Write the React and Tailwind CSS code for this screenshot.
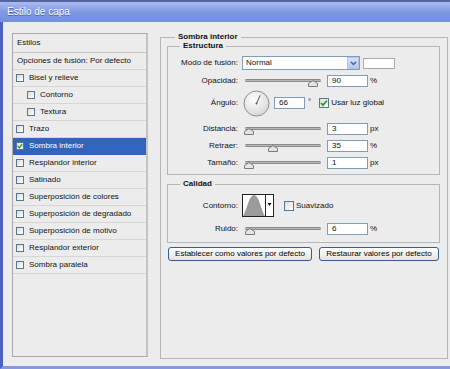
import React from "react";

const font = { fontFamily: '"Liberation Sans", Arial, sans-serif' };

// small xp-ish checkbox, optionally checked
const Check = ({ checked, size = 8, className = "" }) => (
  <span
    className={`flex shrink-0 items-center justify-center border border-[#5b7593] bg-gradient-to-br from-[#dcdcd6] to-white ${className}`}
    style={{ width: size, height: size }}
  >
    {checked && (
      <svg width={size - 2} height={size - 2} viewBox="0 0 8 8">
        <path d="M1 4 L3 6.2 L7 1.5" stroke="#21a121" strokeWidth="1.8" fill="none" />
      </svg>
    )}
  </span>
);

const styles = [
  { name: "Bisel y relieve" },
  { name: "Contorno", nested: true },
  { name: "Textura", nested: true },
  { name: "Trazo" },
  { name: "Sombra interior", active: true },
  { name: "Resplandor interior" },
  { name: "Satinado" },
  { name: "Superposición de colores" },
  { name: "Superposición de degradado" },
  { name: "Superposición de motivo" },
  { name: "Resplandor exterior" },
  { name: "Sombra paralela" },
];

const Field = ({ value, w = 41 }) => (
  <div
    className="flex h-[12px] items-center border border-[#7f9db9] bg-white pl-[4px]"
    style={{ width: w }}
  >
    {value}
  </div>
);

const Thumb = () => (
  <svg width="10" height="7" viewBox="0 0 10 7">
    <path d="M0.5 6.5 V3.5 L5 0.5 L9.5 3.5 V6.5 Z" fill="#e4e4e4" stroke="#7a7a7a" />
  </svg>
);

const Slider = ({ pos }) => (
  <div className="relative ml-[7px] h-[11px] w-[76px]">
    <div className="absolute top-[4px] h-[3px] w-full rounded-full border-y border-[#8a8a8a] bg-[#b8b8b8]" />
    <div className="absolute top-[5px]" style={{ left: pos - 5 }}>
      <Thumb />
    </div>
  </div>
);

const SliderRow = ({ label, pos, value, unit, className = "" }) => (
  <div className={`flex h-[17px] items-center ${className}`}>
    <span className="w-[70px] text-right">{label}</span>
    <Slider pos={pos} />
    <div className="ml-[6px]">
      <Field value={value} />
    </div>
    <span className="ml-[2px]">{unit}</span>
  </div>
);

const Dial = () => (
  <svg width="27" height="27" viewBox="0 0 27 27" className="ml-[5px]">
    <defs>
      <radialGradient id="dg" cx="40%" cy="35%" r="70%">
        <stop offset="0%" stopColor="#ffffff" />
        <stop offset="100%" stopColor="#d6d6d6" />
      </radialGradient>
    </defs>
    <circle cx="13.5" cy="13.5" r="12.5" fill="url(#dg)" stroke="#8e8e8e" />
    <line x1="13.5" y1="13.5" x2="17.2" y2="5.3" stroke="#555" strokeWidth="1" />
    <circle cx="13.5" cy="13.5" r="1" fill="#555" />
  </svg>
);

const Button = ({ children, w }) => (
  <button
    className="flex h-[14px] items-center justify-center rounded-[3px] border border-[#3c5a8a] bg-gradient-to-b from-white to-[#e4e4dc] text-[8px] leading-none text-black"
    style={{ width: w }}
  >
    {children}
  </button>
);

export default function App() {
  return (
    <div className="flex h-[369px] w-[450px] flex-col overflow-hidden bg-[#ececec] text-[8px] leading-none text-[#111]" style={font}>
      {/* title bar */}
      <div className="flex h-[22px] items-center border-t-2 border-[#55649c] bg-gradient-to-b from-[#a9bbf0] via-[#7f98e2] to-[#7490de] pl-[7px]">
        <span className="text-[10px] text-white [text-shadow:0_1px_0_#4b5fa8]">Estilo de capa</span>
      </div>

      <div className="flex flex-1 border-b-[3px] border-l-[3px] border-b-[#8798e2] border-l-[#4c62c2]">
        {/* left: styles list */}
        <div className="w-[157px] shrink-0 pl-[9px] pt-[11px]">
          <div className="flex h-[324px] w-[136px] flex-col border border-r-2 border-[#a8a8a8] border-r-[#c2c2c2]">
            <div className="flex h-[19px] shrink-0 items-center border-b border-[#c4c4c4] pl-[4px]">Estilos</div>
            <div className="flex h-[17px] shrink-0 items-center border-b border-[#d6d6d6] pl-[4px]">
              Opciones de fusión: Por defecto
            </div>
            {styles.map((s) => (
              <div
                key={s.name}
                className={`flex h-[17px] shrink-0 items-center border-b ${
                  s.active ? "border-[#2f62b8] bg-[#3164bd] text-white" : "border-[#d6d6d6]"
                } ${s.nested ? "pl-[14px]" : "pl-[3px]"}`}
              >
                <Check checked={s.active} />
                <span className="ml-[5px]">{s.name}</span>
              </div>
            ))}
          </div>
        </div>

        {/* right: settings */}
        <fieldset className="mt-[10px] h-[327px] w-[288px] border border-[#b6b6b6] pl-[6px]">
          <legend className="ml-[8px] px-[3px] text-[8px] font-bold leading-[10px]">Sombra interior</legend>

          <fieldset className="-mt-[1px] w-[273px] border border-[#b6b6b6] pb-[3px] pt-[4px]">
            <legend className="ml-[12px] px-[3px] font-bold leading-[10px]">Estructura</legend>

            <div className="flex h-[16px] items-center">
              <span className="w-[70px] text-right">Modo de fusión:</span>
              <div className="ml-[4px] flex h-[14px] w-[118px] items-center border border-[#7f9db9] bg-white pl-[3px]">
                <span className="flex-1">Normal</span>
                <span className="flex h-[12px] w-[12px] items-center justify-center border border-[#b0c4ef] bg-gradient-to-b from-[#d6e2fc] to-[#b4c8f4]">
                  <svg width="7" height="5" viewBox="0 0 7 5">
                    <path d="M0.8 0.8 L3.5 3.6 L6.2 0.8" stroke="#4d6185" strokeWidth="1.4" fill="none" />
                  </svg>
                </span>
              </div>
              <div className="ml-[3px] h-[11px] w-[32px] border border-[#a9a9a9] bg-white" />
            </div>

            <SliderRow className="mt-[1px]" label="Opacidad:" pos={68} value="90" unit="%" />

            <div className="mt-[1px] flex h-[26px] items-center">
              <span className="w-[70px] text-right">Ángulo:</span>
              <Dial />
              <div className="ml-[4px]">
                <Field value="66" w={31} />
              </div>
              <span className="ml-[3px] self-start pt-[8px]">°</span>
              <Check checked size={10} className="ml-[8px] border-[#1c5180] bg-white" />
              <span className="ml-[2px]">Usar luz global</span>
            </div>

            <SliderRow className="mt-[4px]" label="Distancia:" pos={4} value="3" unit="px" />
            <SliderRow label="Retraer:" pos={28} value="35" unit="%" />
            <SliderRow label="Tamaño:" pos={4} value="1" unit="px" />
          </fieldset>

          <fieldset className="mt-[4px] w-[273px] border border-[#b6b6b6] pb-[5px] pt-[5px]">
            <legend className="ml-[12px] px-[3px] font-bold leading-[10px]">Calidad</legend>

            <div className="flex h-[23px] items-center">
              <span className="w-[70px] text-right">Contorno:</span>
              <svg width="32" height="23" viewBox="0 0 32 23" className="ml-[4px]">
                <rect x="0.5" y="0.5" width="31" height="22" fill="#fff" stroke="#222" />
                <path d="M1 22 C5 16 7 1 12 1 C17 1 19 16 23 22 Z" fill="#9b9b9b" />
                <line x1="23.5" y1="0.5" x2="23.5" y2="22.5" stroke="#222" />
                <path d="M25.5 9 L29.5 9 L27.5 12 Z" fill="#111" />
              </svg>
              <Check size={10} className="ml-[10px] border-[#1c5180] bg-white" />
              <span className="ml-[2px]">Suavizado</span>
            </div>

            <SliderRow className="mt-[3px]" label="Ruido:" pos={5} value="6" unit="%" />
          </fieldset>

          <div className="ml-[1px] mt-[4px] flex gap-[7px]">
            <Button w={144}>Establecer como valores por defecto</Button>
            <Button w={120}>Restaurar valores por defecto</Button>
          </div>
        </fieldset>
      </div>
    </div>
  );
}
